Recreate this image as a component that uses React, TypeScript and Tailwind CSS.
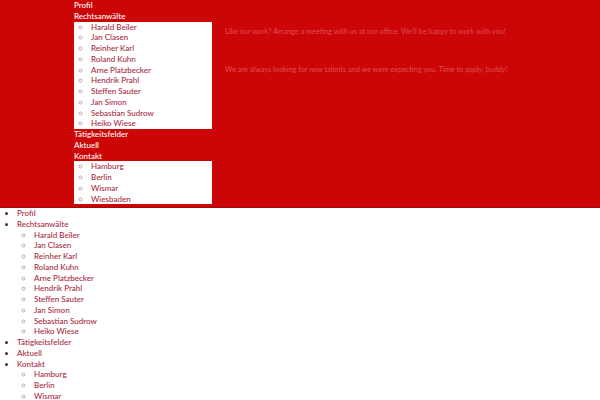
import React from 'react';

const lawyers = [
  'Harald Beiler',
  'Jan Clasen',
  'Reinher Karl',
  'Roland Kuhn',
  'Arne Platzbecker',
  'Hendrik Prahl',
  'Steffen Sauter',
  'Jan Simon',
  'Sebastian Sudrow',
  'Heiko Wiese',
];

const offices = ['Hamburg', 'Berlin', 'Wismar', 'Wiesbaden'];

const SubList = ({ items, boxed }: { items: string[]; boxed?: boolean }) => (
  <ul
    className={
      boxed
        ? 'bg-white pl-[17px] list-[circle] marker:text-[#b9a0a6]'
        : 'pl-[17px] list-[circle] marker:text-[#b9a0a6]'
    }
  >
    {items.map((name) => (
      <li key={name} className="text-[#a82a3e]">
        {name}
      </li>
    ))}
  </ul>
);

export default function App() {
  return (
    <div
      className="bg-white text-[8px] leading-[10.75px] font-medium min-h-[400px]"
      style={{ fontFamily: 'Lato, "Noto Sans", sans-serif' }}
    >
      <header className="bg-[#cc0606] h-[208px] border-b border-[#a30a0a] flex">
        <nav className="ml-[74px] w-[138px] shrink-0 text-white">
          <ul>
            <li>Profil</li>
            <li>
              Rechtsanwälte
              <SubList items={lawyers} boxed />
            </li>
            <li>Tätigkeitsfelder</li>
            <li>Aktuell</li>
            <li>
              Kontakt
              <SubList items={offices} boxed />
            </li>
          </ul>
        </nav>
        <div className="ml-[13px] pt-[27px] flex flex-col gap-[27px] text-[7.3px] font-normal text-[#dc4f53]">
          <p>Like our work? Arrange a meeting with us at our office. We'll be happy to work with you!</p>
          <p>We are always looking for new talents and we were expecting you. Time to apply, buddy!</p>
        </div>
      </header>
      <ul className="pl-[17px] list-disc marker:text-[#5a2a30] text-[#a82a3e]">
        <li>Profil</li>
        <li>
          Rechtsanwälte
          <SubList items={lawyers} />
        </li>
        <li>Tätigkeitsfelder</li>
        <li>Aktuell</li>
        <li>
          Kontakt
          <SubList items={offices} />
        </li>
      </ul>
    </div>
  );
}
